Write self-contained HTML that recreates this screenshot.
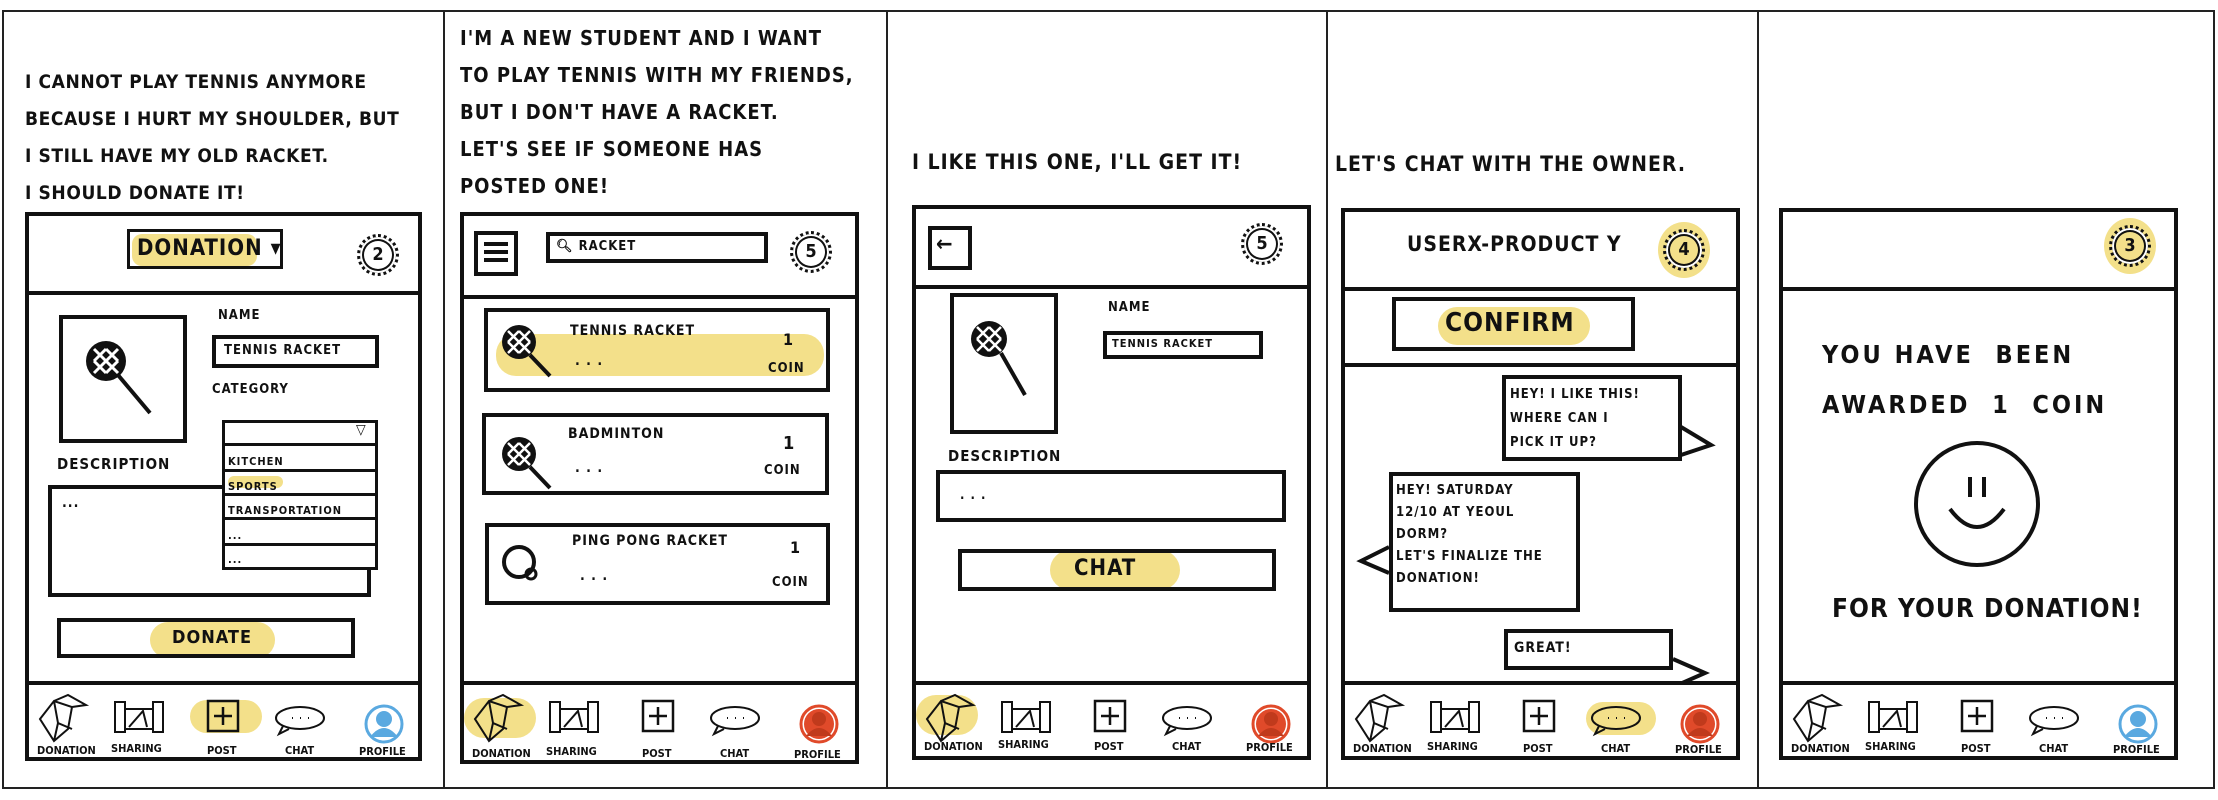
<!DOCTYPE html>
<html><head><meta charset="utf-8">
<style>
*{margin:0;padding:0;box-sizing:border-box}
body{width:2218px;height:800px;background:#fff;position:relative;overflow:hidden;font-family:"DejaVu Sans Condensed","Liberation Sans",sans-serif;font-weight:bold;color:#111}
.a{position:absolute}
.b{position:absolute;border:4px solid #111}
.t{position:absolute;white-space:nowrap;text-transform:uppercase;letter-spacing:1px}
.hl{position:absolute;background:#f3e08a;border-radius:20px}
.coin{position:absolute;width:42px;height:42px;border-radius:50%;border:3px dotted #111;box-shadow:inset 0 0 0 2px #fff,inset 0 0 0 4px #111;font-size:18px;text-align:center;line-height:36px}
.sm{font-size:13px}
</style></head><body>
<div class="a" style="left:2px;top:10px;width:2213px;height:779px;border:2px solid #222"></div>
<div class="a" style="left:443px;top:10px;width:2px;height:779px;background:#222"></div>
<div class="a" style="left:886px;top:10px;width:2px;height:779px;background:#222"></div>
<div class="a" style="left:1326px;top:10px;width:2px;height:779px;background:#222"></div>
<div class="a" style="left:1757px;top:10px;width:2px;height:779px;background:#222"></div>

<!-- PANEL 1 -->
<div class="t" style="left:25px;top:64px;font-size:19px;line-height:37px;letter-spacing:0.6px">I cannot play tennis anymore<br>because I hurt my shoulder, but<br>I still have my old racket.<br>I should donate it!</div>
<div class="b" style="left:25px;top:212px;width:397px;height:549px"></div>
<div class="a" style="left:25px;top:291px;width:397px;height:4px;background:#111"></div>
<div class="a" style="left:25px;top:681px;width:397px;height:4px;background:#111"></div>
<div class="hl" style="left:132px;top:234px;width:125px;height:32px;border-radius:10px"></div>
<div class="b" style="left:127px;top:229px;width:156px;height:40px;border-width:3px"></div>
<div class="t" style="left:137px;top:236px;font-size:22px">Donation ▾</div>
<div class="coin" style="left:357px;top:234px">2</div>
<div class="b" style="left:59px;top:315px;width:128px;height:128px"></div>
<svg class="a" style="left:80px;top:335px" width="90" height="90"><circle cx="26" cy="26" r="20" fill="#111"/><path d="M14 14l24 24M14 26l12 12M26 14l12 12M14 38l24-24M14 26l12-12M26 38l12-12" stroke="#fff" stroke-width="3"/><line x1="38" y1="40" x2="70" y2="78" stroke="#111" stroke-width="4"/></svg>
<div class="t sm" style="left:218px;top:308px">Name</div>
<div class="b" style="left:212px;top:335px;width:167px;height:33px"></div>
<div class="t sm" style="left:224px;top:343px">Tennis racket</div>
<div class="t sm" style="left:212px;top:382px">Category</div>
<div class="t sm" style="left:57px;top:455px;font-size:15px">Description</div>
<div class="b" style="left:48px;top:485px;width:323px;height:112px"></div>
<div class="t" style="left:62px;top:495px;font-size:14px">...</div>
<div class="a" style="left:222px;top:420px;width:156px;height:150px;background:#fff;border:3px solid #111"></div>
<div class="a" style="left:222px;top:443px;width:156px;height:3px;background:#111"></div>
<div class="a" style="left:222px;top:469px;width:156px;height:3px;background:#111"></div>
<div class="a" style="left:222px;top:493px;width:156px;height:3px;background:#111"></div>
<div class="a" style="left:222px;top:517px;width:156px;height:3px;background:#111"></div>
<div class="a" style="left:222px;top:543px;width:156px;height:3px;background:#111"></div>
<div class="t" style="left:356px;top:422px;font-size:14px">▽</div>
<div class="hl" style="left:228px;top:476px;width:55px;height:12px"></div>
<div class="t" style="left:228px;top:450px;font-size:11px;line-height:24.5px">Kitchen<br>Sports<br>Transportation<br>...<br>...</div>
<div class="hl" style="left:150px;top:622px;width:125px;height:36px"></div>
<div class="b" style="left:57px;top:618px;width:298px;height:40px"></div>
<div class="t" style="left:172px;top:627px;font-size:18px">Donate</div>

<!-- PANEL 2 -->
<div class="t" style="left:460px;top:20px;font-size:20px;line-height:37px">I'm a new student and I want<br>to play tennis with my friends,<br>but I don't have a racket.<br>Let's see if someone has<br>posted one!</div>
<div class="b" style="left:460px;top:212px;width:399px;height:552px"></div>
<div class="a" style="left:460px;top:295px;width:399px;height:4px;background:#111"></div>
<div class="a" style="left:460px;top:681px;width:399px;height:4px;background:#111"></div>
<div class="b" style="left:474px;top:231px;width:44px;height:45px"></div>
<div class="a" style="left:484px;top:242px;width:24px;height:4px;background:#111;box-shadow:0 8px 0 #111,0 16px 0 #111"></div>
<div class="b" style="left:546px;top:232px;width:222px;height:31px"></div>
<div class="t sm" style="left:556px;top:239px">🔍︎ Racket</div>
<div class="coin" style="left:790px;top:231px">5</div>
<div class="hl" style="left:496px;top:334px;width:328px;height:42px"></div>
<div class="b" style="left:484px;top:308px;width:346px;height:84px"></div>
<div class="b" style="left:482px;top:413px;width:347px;height:82px"></div>
<div class="b" style="left:485px;top:523px;width:345px;height:82px"></div>
<svg class="a" style="left:495px;top:318px" width="70" height="290"><g id="r"><circle cx="24" cy="24" r="17" fill="#111"/><path d="M13 13l22 22M13 24l11 11M24 13l11 11M13 35l22-22M13 24l11-11M24 35l11-11" stroke="#fff" stroke-width="2.5"/><line x1="35" y1="37" x2="55" y2="58" stroke="#111" stroke-width="4"/></g><use href="#r" y="112"/><circle cx="24" cy="244" r="15" fill="none" stroke="#111" stroke-width="4"/><circle cx="36" cy="256" r="5" fill="none" stroke="#111" stroke-width="3"/></svg>
<div class="t sm" style="left:570px;top:323px;font-size:14px">Tennis racket</div>
<div class="t sm" style="left:568px;top:426px;font-size:14px">Badminton</div>
<div class="t sm" style="left:572px;top:533px;font-size:14px">Ping pong racket</div>
<div class="t" style="left:575px;top:353px;font-size:14px">. . .</div>
<div class="t" style="left:575px;top:460px;font-size:14px">. . .</div>
<div class="t" style="left:580px;top:568px;font-size:14px">. . .</div>
<div class="t" style="left:783px;top:330px;font-size:16px">1</div><div class="t sm" style="left:768px;top:361px">Coin</div>
<div class="t" style="left:783px;top:433px;font-size:18px">1</div><div class="t sm" style="left:764px;top:463px">Coin</div>
<div class="t" style="left:790px;top:538px;font-size:16px">1</div><div class="t sm" style="left:772px;top:575px">Coin</div>

<!-- PANEL 3 -->
<div class="t" style="left:912px;top:150px;font-size:21px">I like this one, I'll get it!</div>
<div class="b" style="left:912px;top:205px;width:399px;height:555px"></div>
<div class="a" style="left:912px;top:285px;width:399px;height:4px;background:#111"></div>
<div class="a" style="left:912px;top:681px;width:399px;height:4px;background:#111"></div>
<div class="b" style="left:928px;top:226px;width:44px;height:44px"></div>
<div class="t" style="left:936px;top:232px;font-size:22px">←</div>
<div class="coin" style="left:1241px;top:223px">5</div>
<div class="b" style="left:950px;top:293px;width:108px;height:141px"></div>
<svg class="a" style="left:965px;top:315px" width="80" height="90"><circle cx="24" cy="24" r="18" fill="#111"/><path d="M12 12l24 24M12 24l12 12M24 12l12 12M12 36l24-24M12 24l12-12M24 36l12-12" stroke="#fff" stroke-width="2.5"/><line x1="36" y1="38" x2="60" y2="80" stroke="#111" stroke-width="4"/></svg>
<div class="t sm" style="left:1108px;top:300px">Name</div>
<div class="b" style="left:1103px;top:331px;width:160px;height:28px"></div>
<div class="t" style="left:1112px;top:337px;font-size:11px">Tennis racket</div>
<div class="t sm" style="left:948px;top:447px;font-size:15px">Description</div>
<div class="b" style="left:936px;top:470px;width:350px;height:52px"></div>
<div class="t sm" style="left:960px;top:488px">. . .</div>
<div class="hl" style="left:1050px;top:550px;width:130px;height:40px"></div>
<div class="b" style="left:958px;top:549px;width:318px;height:42px"></div>
<div class="t" style="left:1074px;top:556px;font-size:22px">Chat</div>

<!-- PANEL 4 -->
<div class="t" style="left:1335px;top:152px;font-size:21px">Let's chat with the owner.</div>
<div class="b" style="left:1341px;top:208px;width:399px;height:552px"></div>
<div class="a" style="left:1341px;top:287px;width:399px;height:4px;background:#111"></div>
<div class="a" style="left:1341px;top:363px;width:399px;height:4px;background:#111"></div>
<div class="a" style="left:1341px;top:681px;width:399px;height:4px;background:#111"></div>
<div class="t" style="left:1407px;top:232px;font-size:21px">UserX-Product Y</div>
<div class="a" style="left:1658px;top:222px;width:52px;height:56px;border-radius:50%;background:#f3e08a"></div>
<div class="coin" style="left:1663px;top:229px">4</div>
<div class="hl" style="left:1438px;top:307px;width:152px;height:38px"></div>
<div class="b" style="left:1392px;top:297px;width:243px;height:54px"></div>
<div class="t" style="left:1445px;top:308px;font-size:26px">Confirm</div>
<svg class="a" style="left:1341px;top:367px" width="399" height="314" fill="none" stroke="#111" stroke-width="4"><path d="M340 60l30 18-30 10"/><path d="M48 180l-28 14 28 12"/><path d="M332 292l32 14-32 14"/></svg>
<div class="b" style="left:1502px;top:375px;width:180px;height:86px"></div>
<div class="t" style="left:1510px;top:383px;font-size:13px;line-height:24px">Hey! I like this!<br>Where can I<br>pick it up?</div>
<div class="b" style="left:1389px;top:472px;width:191px;height:140px"></div>
<div class="t" style="left:1396px;top:480px;font-size:13px;line-height:22px">Hey! Saturday<br>12/10 at Yeoul<br>Dorm?<br>Let's finalize the<br>donation!</div>
<div class="b" style="left:1504px;top:629px;width:169px;height:41px"></div>
<div class="t" style="left:1514px;top:640px;font-size:14px">Great!</div>

<!-- PANEL 5 -->
<div class="b" style="left:1779px;top:208px;width:399px;height:552px"></div>
<div class="a" style="left:1779px;top:287px;width:399px;height:4px;background:#111"></div>
<div class="a" style="left:1779px;top:681px;width:399px;height:4px;background:#111"></div>
<div class="a" style="left:2104px;top:218px;width:52px;height:56px;border-radius:50%;background:#f3e08a"></div>
<div class="coin" style="left:2109px;top:225px">3</div>
<div class="t" style="left:1822px;top:330px;font-size:25px;line-height:50px;letter-spacing:3px">You have &nbsp;been<br>awarded &nbsp;1 &nbsp;coin</div>
<svg class="a" style="left:1910px;top:437px" width="134" height="134" fill="none" stroke="#111" stroke-width="4"><circle cx="67" cy="67" r="61"/><path d="M60 40v20M74 40v20M40 72q27 36 54 0"/></svg>
<div class="t" style="left:1832px;top:594px;font-size:26px">For your donation!</div>

<svg width="0" height="0" style="position:absolute"><defs>
<g id="nav" fill="none" stroke="#111" stroke-width="2">
<path d="M15 36l14-18 18 6-4 22-14 12zM29 18l4 22 14 6M33 40l-4 18M29 18l14-6 18 10-14 2"/>
<rect x="90" y="19" width="10" height="30"/><rect x="128" y="19" width="10" height="30"/><path d="M100 26h28v20h-28zM104 44l14-16 4 16"/>
<rect x="183" y="18" width="30" height="30" stroke-width="2.5"/><path d="M198 24v18M189 33h18" stroke-width="2.5"/>
<ellipse cx="275" cy="35" rx="24" ry="11"/><path d="M258 43l-4 8 10-5"/><path d="M267 35h1M275 35h1M283 35h1" stroke-width="2"/>
</g>
<g id="pb"><circle cx="359" cy="41" r="18" fill="#fff" stroke="#5aa9e0" stroke-width="3"/><circle cx="359" cy="36" r="8" fill="#5aa9e0"/><path d="M345 54q14-18 28 0" fill="#5aa9e0"/></g>
<g id="pr"><circle cx="359" cy="41" r="18" fill="#fff" stroke="#e04a2a" stroke-width="3"/><circle cx="359" cy="41" r="15" fill="#e04a2a"/><circle cx="359" cy="36" r="7" fill="#c03a1c"/><path d="M346 53q13-16 26 0" fill="#c03a1c"/></g>
</defs></svg>

<div class="a" style="left:25px;top:683px;width:397px;height:78px">
 <div class="hl" style="left:165px;top:17px;width:72px;height:33px"></div>
 <svg class="a" width="397" height="78"><use href="#nav"/><use href="#pb"/></svg>
</div>
<div class="a" style="left:460px;top:683px;width:399px;height:78px">
 <div class="hl" style="left:4px;top:15px;width:72px;height:40px"></div>
 <svg class="a" width="399" height="78"><use href="#nav"/><use href="#pr"/></svg>
</div>
<div class="a" style="left:912px;top:683px;width:399px;height:78px">
 <div class="hl" style="left:4px;top:12px;width:62px;height:40px"></div>
 <svg class="a" width="399" height="78"><use href="#nav"/><use href="#pr"/></svg>
</div>
<div class="a" style="left:1341px;top:683px;width:399px;height:78px">
 <div class="hl" style="left:245px;top:19px;width:70px;height:33px"></div>
 <svg class="a" width="399" height="78"><use href="#nav"/><use href="#pr"/></svg>
</div>
<div class="a" style="left:1779px;top:683px;width:399px;height:78px">
 <svg class="a" width="399" height="78"><use href="#nav"/><use href="#pb"/></svg>
</div>

<div class="t" style="left:37px;top:744px;font-size:11px;letter-spacing:0">Donation</div><div class="t" style="left:111px;top:742px;font-size:11px;letter-spacing:0">Sharing</div><div class="t" style="left:207px;top:744px;font-size:11px;letter-spacing:0">Post</div><div class="t" style="left:285px;top:744px;font-size:11px;letter-spacing:0">Chat</div><div class="t" style="left:359px;top:745px;font-size:11px;letter-spacing:0">Profile</div>
<div class="t" style="left:472px;top:747px;font-size:11px;letter-spacing:0">Donation</div><div class="t" style="left:546px;top:745px;font-size:11px;letter-spacing:0">Sharing</div><div class="t" style="left:642px;top:747px;font-size:11px;letter-spacing:0">Post</div><div class="t" style="left:720px;top:747px;font-size:11px;letter-spacing:0">Chat</div><div class="t" style="left:794px;top:748px;font-size:11px;letter-spacing:0">Profile</div>
<div class="t" style="left:924px;top:740px;font-size:11px;letter-spacing:0">Donation</div><div class="t" style="left:998px;top:738px;font-size:11px;letter-spacing:0">Sharing</div><div class="t" style="left:1094px;top:740px;font-size:11px;letter-spacing:0">Post</div><div class="t" style="left:1172px;top:740px;font-size:11px;letter-spacing:0">Chat</div><div class="t" style="left:1246px;top:741px;font-size:11px;letter-spacing:0">Profile</div>
<div class="t" style="left:1353px;top:742px;font-size:11px;letter-spacing:0">Donation</div><div class="t" style="left:1427px;top:740px;font-size:11px;letter-spacing:0">Sharing</div><div class="t" style="left:1523px;top:742px;font-size:11px;letter-spacing:0">Post</div><div class="t" style="left:1601px;top:742px;font-size:11px;letter-spacing:0">Chat</div><div class="t" style="left:1675px;top:743px;font-size:11px;letter-spacing:0">Profile</div>
<div class="t" style="left:1791px;top:742px;font-size:11px;letter-spacing:0">Donation</div><div class="t" style="left:1865px;top:740px;font-size:11px;letter-spacing:0">Sharing</div><div class="t" style="left:1961px;top:742px;font-size:11px;letter-spacing:0">Post</div><div class="t" style="left:2039px;top:742px;font-size:11px;letter-spacing:0">Chat</div><div class="t" style="left:2113px;top:743px;font-size:11px;letter-spacing:0">Profile</div>
</body></html>
